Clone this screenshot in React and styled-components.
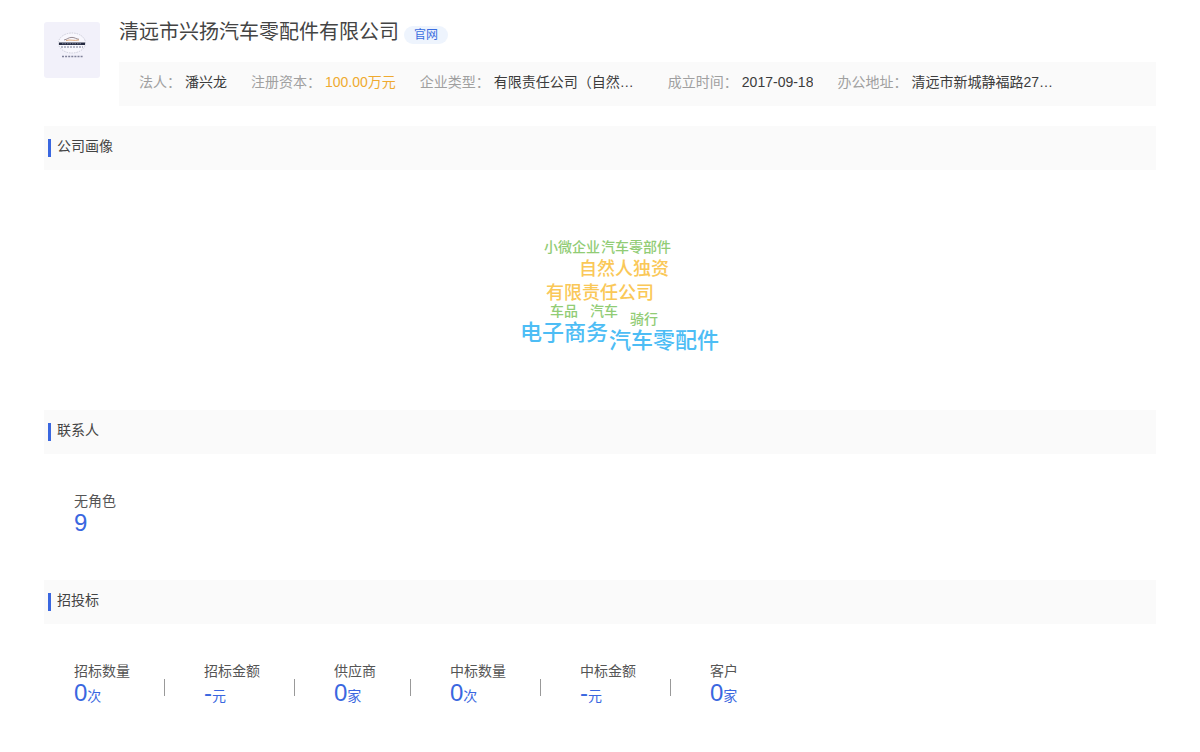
import styled, { createGlobalStyle } from "styled-components";

const GlobalStyle = createGlobalStyle`
  * {
    box-sizing: border-box;
  }

  body {
    margin: 0;
    background: #fff;
    color: #444;
    font-family: "Liberation Sans", "Noto Sans CJK SC", sans-serif;
    font-size: 14px;
    line-height: 20px;
  }
`;

const Page = styled.main`
  padding: 18px 44px 0;
`;

const Header = styled.header`
  display: flex;
  gap: 19px;
  margin-bottom: 20px;
`;

const Logo = styled.svg`
  flex: none;
  width: 56px;
  height: 56px;
  margin-top: 4px;
`;

const Company = styled.div`
  flex: 1;
  min-width: 0;
`;

const TitleRow = styled.div`
  display: flex;
  align-items: flex-end;
  gap: 5px;
  margin-bottom: 16px;
`;

const Title = styled.h1`
  margin: 0;
  font-size: 20px;
  line-height: 28px;
  font-weight: 400;
  color: #444;
`;

const SiteLink = styled.a`
  margin-bottom: 2px;
  padding: 0 10px;
  border-radius: 9px;
  background: #eef4fd;
  color: #3a6de0;
  font-size: 12px;
  line-height: 18px;
  text-decoration: none;
`;

const InfoBar = styled.dl`
  display: flex;
  gap: 24px;
  margin: 0;
  padding: 10px 20px 14px;
  background: #fafafa;
`;

const InfoItem = styled.div`
  display: flex;
  gap: 4px;
  white-space: nowrap;
`;

const InfoLabel = styled.dt`
  color: #a0a0a0;
`;

const InfoValue = styled.dd`
  margin: 0;
  width: ${({ $fixed }) => ($fixed ? "150px" : "auto")};
  overflow: hidden;
  text-overflow: ellipsis;
  color: ${({ $accent }) => ($accent ? "#efaa30" : "#3c3c3c")};
`;

const SectionHead = styled.div`
  display: flex;
  padding: 10px 4px 13px;
  background: #fafafa;
`;

const SectionTitle = styled.h2`
  display: flex;
  align-items: flex-start;
  gap: 6px;
  margin: 0;
  font-size: 14px;
  line-height: 20px;
  font-weight: 400;

  &::before {
    content: "";
    width: 3px;
    height: 18px;
    margin-top: 3px;
    background: #3a67e0;
  }
`;

const CloudPanel = styled.div`
  display: flex;
  justify-content: center;
  height: 240px;
`;

const Cloud = styled.div`
  position: relative;
  width: 240px;
`;

const Word = styled.span`
  position: absolute;
  left: ${({ $x }) => $x}px;
  top: ${({ $y }) => $y}px;
  color: ${({ $color }) => $color};
  font-size: ${({ $size }) => $size}px;
  line-height: 24px;
  font-weight: 500;
  white-space: nowrap;
`;

const Stats = styled.dl`
  display: flex;
  margin: 0;
  padding: 37px 30px 46px;
`;

const Stat = styled.div`
  display: flex;
  flex-direction: column;

  & + & {
    margin-left: 34px;
    padding-left: 40px;
    background: linear-gradient(#999, #999) 0 18px / 1px 17px no-repeat;
  }
`;

const StatLabel = styled.dt`
  color: #555;
`;

const StatValue = styled.dd`
  margin: 0;
  color: #3a67e0;
  font-size: 24px;
  line-height: 23px;
`;

const Unit = styled.span`
  font-size: 14px;
  line-height: 20px;
`;

const info = [
  { label: "法人：", value: "潘兴龙" },
  { label: "注册资本：", value: "100.00万元", accent: true },
  { label: "企业类型：", value: "有限责任公司（自然…", fixed: true },
  { label: "成立时间：", value: "2017-09-18" },
  { label: "办公地址：", value: "清远市新城静福路27…", fixed: true },
];

const GREEN = "#91cc75";
const YELLOW = "#fac858";
const BLUE = "#4dbdf5";

const words = [
  { text: "小微企业", x: 64, y: 65, size: 14, color: GREEN },
  { text: "汽车零部件", x: 121, y: 65, size: 14, color: GREEN },
  { text: "自然人独资", x: 99, y: 87, size: 18, color: YELLOW },
  { text: "有限责任公司", x: 66, y: 111, size: 18, color: YELLOW },
  { text: "车品", x: 70, y: 129, size: 14, color: GREEN },
  { text: "汽车", x: 110, y: 129, size: 14, color: GREEN },
  { text: "骑行", x: 150, y: 137, size: 14, color: GREEN },
  { text: "电子商务", x: 40, y: 151, size: 22, color: BLUE },
  { text: "汽车零配件", x: 129, y: 159, size: 22, color: BLUE },
];

const contacts = [{ label: "无角色", value: "9" }];

const bids = [
  { label: "招标数量", value: "0", unit: "次" },
  { label: "招标金额", value: "-", unit: "元" },
  { label: "供应商", value: "0", unit: "家" },
  { label: "中标数量", value: "0", unit: "次" },
  { label: "中标金额", value: "-", unit: "元" },
  { label: "客户", value: "0", unit: "家" },
];

const CompanyLogo = () => (
  <Logo viewBox="0 0 56 56" role="img" aria-label="兴扬汽车零配件">
    <rect width="56" height="56" rx="3" fill="#f2f1fa" />
    <ellipse
      cx="28"
      cy="21"
      rx="13.5"
      ry="10"
      fill="#f8f7fd"
      stroke="#c3c4d0"
      strokeWidth="0.8"
      strokeDasharray="1.5 1"
    />
    <path d="M20 18c3-.4 4.500-2.800 8-2.600 3 .1 4 1.600 7 1.900" fill="none" stroke="#8c7f86" strokeWidth="0.9" />
    <path d="M22 18.600c4-1.500 8 .6 13-.6" fill="none" stroke="#e0a36b" strokeWidth="0.9" />
    <rect x="15" y="20.500" width="26" height="2.500" fill="#252a40" />
    <path d="M18 21.700h20" stroke="#8c92ab" strokeWidth="0.8" strokeDasharray="1.500 1" />
    <path d="M17 25h22" stroke="#777b92" strokeWidth="1" strokeDasharray="2 1" />
    <path d="M18 34.500h21" stroke="#80829a" strokeWidth="1.600" strokeDasharray="2 1.100" />
  </Logo>
);

const Section = ({ title, children }) => (
  <section>
    <SectionHead>
      <SectionTitle>{title}</SectionTitle>
    </SectionHead>
    {children}
  </section>
);

const StatList = ({ items }) => (
  <Stats>
    {items.map((item) => (
      <Stat key={item.label}>
        <StatLabel>{item.label}</StatLabel>
        <StatValue>
          {item.value}
          {item.unit && <Unit>{item.unit}</Unit>}
        </StatValue>
      </Stat>
    ))}
  </Stats>
);

const App = () => {
  return (
    <Page lang="zh-CN">
      <GlobalStyle />
      <Header>
        <CompanyLogo />
        <Company>
          <TitleRow>
            <Title>清远市兴扬汽车零配件有限公司</Title>
            <SiteLink href="#site">官网</SiteLink>
          </TitleRow>
          <InfoBar>
            {info.map((item) => (
              <InfoItem key={item.label}>
                <InfoLabel>{item.label}</InfoLabel>
                <InfoValue $fixed={item.fixed} $accent={item.accent}>
                  {item.value}
                </InfoValue>
              </InfoItem>
            ))}
          </InfoBar>
        </Company>
      </Header>

      <Section title="公司画像">
        <CloudPanel>
          <Cloud>
            {words.map((word) => (
              <Word
                key={word.text}
                $x={word.x}
                $y={word.y}
                $size={word.size}
                $color={word.color}
              >
                {word.text}
              </Word>
            ))}
          </Cloud>
        </CloudPanel>
      </Section>

      <Section title="联系人">
        <StatList items={contacts} />
      </Section>

      <Section title="招投标">
        <StatList items={bids} />
      </Section>
    </Page>
  );
};

export default App;
